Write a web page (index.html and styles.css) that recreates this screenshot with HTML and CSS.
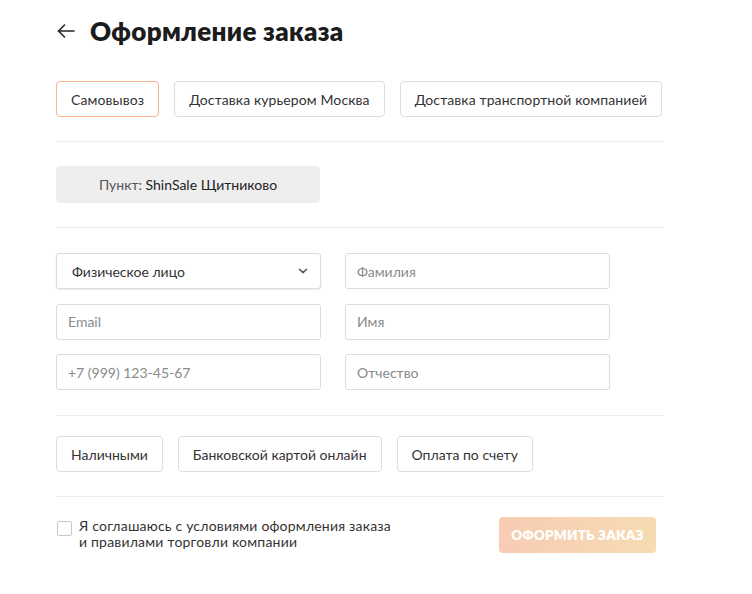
FILE: index.html
```html
<!DOCTYPE html>
<html lang="ru">
<head>
    <meta charset="UTF-8">
    <meta name="viewport" content="width=device-width, initial-scale=1.0">
    <link rel="stylesheet" href="styles.css">
</head>
<body>

<div class="page">
    <div class="header">
        <a class="back" href="#">
            <svg width="18" height="14" viewBox="0 0 18 14" fill="none" stroke="#222" stroke-width="1.6" stroke-linecap="round" stroke-linejoin="round">
                <path d="M17 7H1.5"/>
                <path d="M7.5 1L1.5 7l6 6"/>
            </svg>
        </a>
        <h1>Оформление заказа</h1>
    </div>

    <div class="options">
        <button class="option active">Самовывоз</button>
        <button class="option">Доставка курьером Москва</button>
        <button class="option">Доставка транспортной компанией</button>
    </div>

    <div class="divider"></div>

    <div class="point">Пункт: <span>ShinSale Щитниково</span></div>

    <div class="divider"></div>

    <div class="form">
        <div class="select">
            <span>Физическое лицо</span>
            <svg width="10" height="6" viewBox="0 0 10 6" fill="none" stroke="#555" stroke-width="1.5" stroke-linecap="round" stroke-linejoin="round">
                <path d="M1.5 1.2L5 4.6l3.5-3.4"/>
            </svg>
        </div>
        <input class="field" type="text" placeholder="Фамилия">
        <input class="field" type="text" placeholder="Email">
        <input class="field" type="text" placeholder="Имя">
        <input class="field" type="text" placeholder="+7 (999) 123-45-67">
        <input class="field" type="text" placeholder="Отчество">
    </div>

    <div class="divider"></div>

    <div class="options payments">
        <button class="option">Наличными</button>
        <button class="option">Банковской картой онлайн</button>
        <button class="option">Оплата по счету</button>
    </div>

    <div class="divider"></div>

    <div class="footer">
        <label class="agree">
            <span class="box"></span>
            <span class="agree-text">
                <span>Я соглашаюсь с условиями оформления заказа</span>
                <span>и правилами торговли компании</span>
            </span>
        </label>
        <button class="submit" disabled>Оформить заказ</button>
    </div>
</div>

</body>
</html>
```

FILE: styles.css
```css
body {
    margin: 0;
    padding: 0;
    background: #fff;
    font-family: Lato, "Noto Sans", sans-serif;
    color: #333;
}

.page {
    width: 608px;
    padding: 14px 0 40px 56px;
}

.header {
    display: flex;
    align-items: center;
    height: 34px;
}

.back {
    display: flex;
    align-items: center;
    width: 33px;
    padding-left: 1px;
}

.header h1 {
    margin: 0;
    font-size: 26px;
    font-weight: 800;
    color: #1c1c1c;
    letter-spacing: 0.3px;
}

.options {
    display: flex;
    gap: 15px;
    margin-top: 33px;
}

.option {
    height: 36px;
    padding: 0 14px;
    background: #fff;
    border: 1px solid #ddd;
    border-radius: 4px;
    font-family: inherit;
    font-size: 14px;
    letter-spacing: 0.1px;
    color: #333;
    cursor: pointer;
}

.option.active {
    border-color: #f9b48c;
}

.divider {
    height: 1px;
    background: #eeeeee;
    margin-top: 24px;
}

.point {
    margin-top: 24px;
    width: 264px;
    height: 37px;
    line-height: 37px;
    background: #eeeeee;
    border-radius: 4px;
    text-align: center;
    font-size: 14px;
    color: #555;
}

.point span {
    color: #222;
}

.form {
    display: grid;
    grid-template-columns: 265px 265px;
    column-gap: 24px;
    row-gap: 14.5px;
    margin-top: 25px;
    margin-bottom: 25px;
}

.field,
.select {
    box-sizing: border-box;
    height: 36px;
    border: 1px solid #dcdcdc;
    border-radius: 3px;
    padding: 0 11px;
    font-family: inherit;
    font-size: 14px;
    color: #333;
    background: #fff;
}

.field::placeholder {
    color: #8a8a8a;
}

.select {
    display: flex;
    align-items: center;
    justify-content: space-between;
    padding: 0 12px 0 15px;
    box-shadow: 0 1px 2px rgba(0, 0, 0, 0.08);
}

.payments {
    margin-top: 20px;
}

.payments .option {
    padding: 0 14px;
    letter-spacing: 0;
}

.footer {
    display: flex;
    justify-content: space-between;
    align-items: center;
    width: 600px;
    margin-top: 20px;
}

.agree {
    display: flex;
    align-items: flex-start;
    gap: 7px;
    color: #333;
    padding-left: 1px;
}

.agree-text {
    display: flex;
    flex-direction: column;
    font-size: 14px;
    line-height: 16px;
    letter-spacing: 0.2px;
    margin-top: -2px;
}

.box {
    box-sizing: border-box;
    width: 15px;
    height: 15px;
    margin-top: 1px;
    border: 1px solid #c8c8c8;
    border-radius: 2px;
    flex-shrink: 0;
}

.submit {
    width: 157px;
    height: 36px;
    border: none;
    border-radius: 4px;
    background: linear-gradient(90deg, #f7ccb4, #f6dcb2);
    color: #fff;
    font-family: inherit;
    font-size: 13.5px;
    font-weight: 800;
    letter-spacing: 0.2px;
    text-transform: uppercase;
}
```
